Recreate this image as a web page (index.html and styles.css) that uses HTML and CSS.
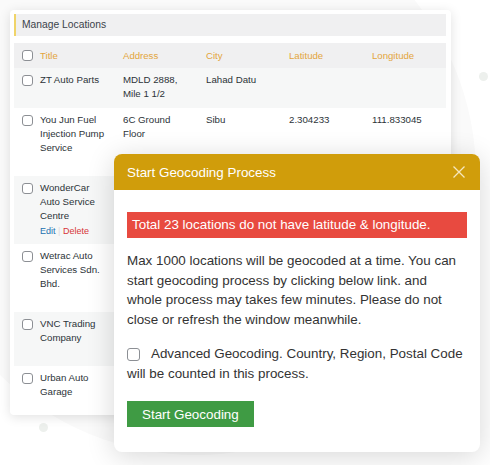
FILE: index.html
```html
<!DOCTYPE html>
<html lang="en">

<head>
    <meta charset="UTF-8">
    <meta name="viewport" content="width=device-width, initial-scale=1.0">
    <title>Manage Locations</title>
    <link rel="stylesheet" href="styles.css">
</head>

<body>
    <div class="bg-circle"></div>
    <div class="dot dot-right"></div>
    <div class="dot dot-left"></div>

    <div class="card">
        <div class="card-title">Manage Locations</div>
        <table class="locations">
            <colgroup>
                <col class="col-check">
                <col class="col-data">
                <col class="col-data">
                <col class="col-data">
                <col class="col-data">
                <col>
            </colgroup>
            <thead>
                <tr>
                    <th class="check"><input type="checkbox" class="box"></th>
                    <th>Title</th>
                    <th>Address</th>
                    <th>City</th>
                    <th>Latitude</th>
                    <th>Longitude</th>
                </tr>
            </thead>
            <tbody>
                <tr>
                    <td class="check"><input type="checkbox" class="box"></td>
                    <td>ZT Auto Parts<div class="actions">Edit | Delete</div></td>
                    <td>MDLD 2888, Mile 1 1/2</td>
                    <td>Lahad Datu</td>
                    <td></td>
                    <td></td>
                </tr>
                <tr>
                    <td class="check"><input type="checkbox" class="box"></td>
                    <td>You Jun Fuel Injection Pump Service<div class="actions">Edit | Delete</div></td>
                    <td>6C Ground Floor</td>
                    <td>Sibu</td>
                    <td>2.304233</td>
                    <td>111.833045</td>
                </tr>
                <tr>
                    <td class="check"><input type="checkbox" class="box"></td>
                    <td>WonderCar Auto Service Centre
                        <div class="actions shown"><a href="#" class="edit">Edit</a> <span class="sep">|</span> <a href="#" class="delete">Delete</a></div>
                    </td>
                    <td></td>
                    <td></td>
                    <td></td>
                    <td></td>
                </tr>
                <tr>
                    <td class="check"><input type="checkbox" class="box"></td>
                    <td>Wetrac Auto Services Sdn. Bhd.<div class="actions">Edit | Delete</div></td>
                    <td></td>
                    <td></td>
                    <td></td>
                    <td></td>
                </tr>
                <tr>
                    <td class="check"><input type="checkbox" class="box"></td>
                    <td>VNC Trading Company<div class="actions">Edit | Delete</div></td>
                    <td></td>
                    <td></td>
                    <td></td>
                    <td></td>
                </tr>
                <tr>
                    <td class="check"><input type="checkbox" class="box"></td>
                    <td>Urban Auto Garage<div class="actions">Edit | Delete</div></td>
                    <td></td>
                    <td></td>
                    <td></td>
                    <td></td>
                </tr>
            </tbody>
        </table>
    </div>

    <div class="modal">
        <div class="modal-head">
            <span class="modal-title">Start Geocoding Process</span>
            <svg class="close" width="12" height="12" viewBox="0 0 12 12">
                <path d="M0.5 0.5 L11.5 11.5 M11.5 0.5 L0.5 11.5" stroke="#f6e7bd" stroke-width="1.3" fill="none"/>
            </svg>
        </div>
        <div class="modal-body">
            <div class="alert">Total 23 locations do not have latitude &amp; longitude.</div>
            <p>Max 1000 locations will be geocoded at a time. You can start geocoding process by clicking below link. and whole process may takes few minutes. Please do not close or refresh the window meanwhile.</p>
            <p class="advanced"><input type="checkbox" class="box big"> Advanced Geocoding. Country, Region, Postal Code will be counted in this process.</p>
            <button type="button" class="start">Start Geocoding</button>
        </div>
    </div>
</body>

</html>
```

FILE: styles.css
```css
body {
    font-family: "Liberation Sans", Arial, sans-serif;
    margin: 0;
    padding: 0;
    width: 490px;
    height: 465px;
    background-color: #fff;
    position: relative;
    overflow: hidden;
}

.bg-circle {
    position: absolute;
    left: -84px;
    top: -105px;
    width: 560px;
    height: 560px;
    border-radius: 50%;
    background: #fafafa;
}

.dot {
    position: absolute;
    width: 9px;
    height: 9px;
    border-radius: 50%;
    background: #edf0ed;
}

.dot-right {
    left: 479px;
    top: 72px;
}

.dot-left {
    left: 39px;
    top: 423px;
}

.card {
    position: relative;
    margin: 10px 0 0 10px;
    width: 441px;
    height: 405px;
    box-sizing: border-box;
    padding: 4px 5px 0 4px;
    background: white;
    border-radius: 4px;
    box-shadow: 0 2px 12px rgba(0, 0, 0, 0.12);
    overflow: hidden;
}

.card-title {
    height: 22px;
    line-height: 22px;
    background: #f0f0f1;
    border-left: 2px solid #f0d469;
    padding-left: 6px;
    font-size: 10.3px;
    color: #3c434a;
}

.locations {
    margin-top: 7px;
    width: 432px;
    border-collapse: collapse;
    table-layout: fixed;
    font-size: 9.7px;
    line-height: 14px;
    color: #2c3338;
}

.col-check {
    width: 26px;
}

.col-data {
    width: 83px;
}

.locations th {
    height: 25px;
    padding: 0;
    background: #f0f0f1;
    text-align: left;
    font-weight: normal;
    color: #e3a53c;
    font-size: 9.6px;
}

.locations td {
    padding: 5px 14px 6px 0;
    vertical-align: top;
}

.locations tbody tr:nth-child(odd) {
    background: #f6f7f7;
}

.locations .check {
    padding-left: 8px;
    padding-right: 0;
}

.box {
    appearance: none;
    -webkit-appearance: none;
    display: block;
    width: 11px;
    height: 11px;
    margin: 0;
    border: 1px solid #8c8f94;
    border-radius: 3px;
    background: white;
    box-sizing: border-box;
}

td .box {
    margin-top: 2px;
}

.actions {
    font-size: 9px;
    line-height: 14px;
    padding-top: 1px;
    visibility: hidden;
}

.actions.shown {
    visibility: visible;
}

.actions a {
    text-decoration: none;
}

.edit {
    color: #2271b1;
}

.delete {
    color: #d63638;
}

.sep {
    color: #dcdcde;
}

.modal {
    position: absolute;
    left: 114px;
    top: 154px;
    width: 366px;
    background: white;
    border-radius: 8px;
    box-shadow: 0 4px 28px rgba(0, 0, 0, 0.16);
    overflow: hidden;
    color: #333;
    font-size: 13.4px;
}

.modal-head {
    height: 36px;
    background: #d09d0b;
    padding: 0 15px 0 13px;
    display: flex;
    align-items: center;
    justify-content: space-between;
}

.modal-title {
    color: white;
}

.modal-body {
    padding: 22px 13px 25px;
}

.alert {
    height: 26px;
    line-height: 26px;
    padding-left: 5px;
    background: #e84a40;
    color: white;
}

.modal p {
    margin: 13px 6px 0 0;
    line-height: 19.7px;
}

.modal p.advanced {
    margin: 14px 0 0;
}

.box.big {
    display: inline-block;
    width: 13px;
    height: 13px;
    margin: 0 8px 0 0;
    vertical-align: -3px;
}

.start {
    display: block;
    margin-top: 18px;
    height: 26px;
    padding: 0 15px;
    border: none;
    background: #3f9b44;
    color: white;
    font-family: inherit;
    font-size: 13.4px;
    cursor: pointer;
}
```
